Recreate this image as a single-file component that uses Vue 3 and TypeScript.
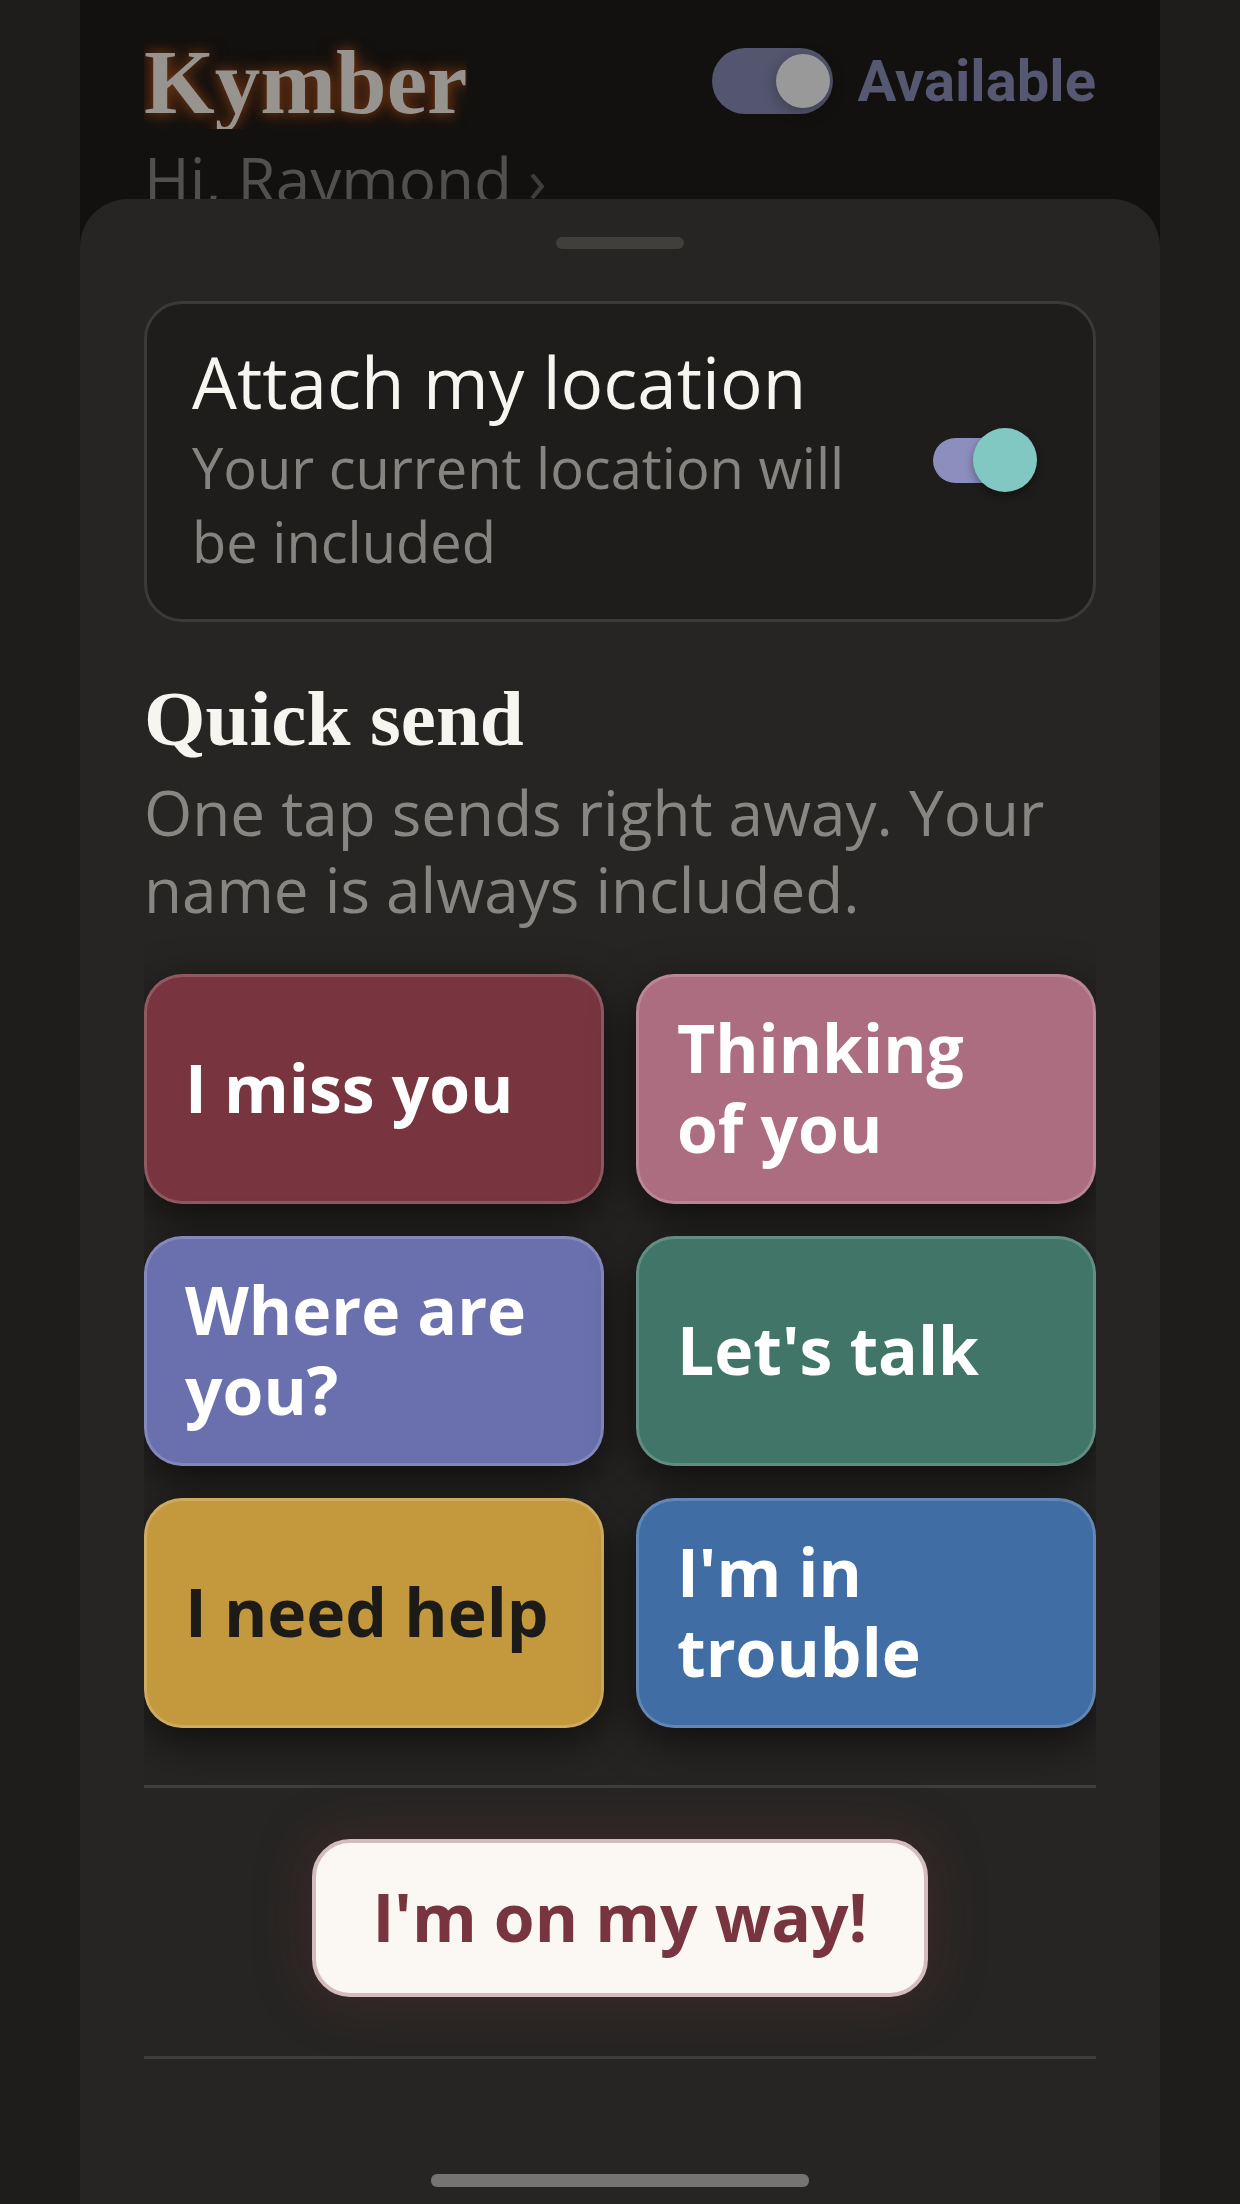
<script setup lang="ts">
import { ref } from 'vue'

interface QuickMessage {
  id: string
  text: string
}

const available = ref<boolean>(true)
const attachLocation = ref<boolean>(true)

const messages: QuickMessage[] = [
  { id: 'miss', text: 'I miss you' },
  { id: 'thinking', text: 'Thinking of you' },
  { id: 'where', text: 'Where are you?' },
  { id: 'talk', text: "Let's talk" },
  { id: 'help', text: 'I need help' },
  { id: 'trouble', text: "I'm in trouble" },
]
</script>

<template>
  <div class="phone">
    <header class="top">
      <div class="top-row">
        <h1 class="brand">Kymber</h1>
        <div class="status">
          <input id="available" v-model="available" class="switch switch-status" type="checkbox" role="switch" />
          <label class="status-label" for="available">Available</label>
        </div>
      </div>
      <a class="greeting" href="#profile">Hi, Raymond <span class="chevron">›</span></a>
    </header>

    <main class="sheet">
      <div class="handle"></div>

      <section class="location">
        <div class="location-text">
          <label class="location-title" for="attach-location">Attach my location</label>
          <p class="location-note">Your current location will be included</p>
        </div>
        <input id="attach-location" v-model="attachLocation" class="switch switch-location" type="checkbox" role="switch" />
      </section>

      <h2 class="heading">Quick send</h2>
      <p class="lead">One tap sends right away. Your name is always included.</p>

      <div class="messages">
        <button v-for="m in messages" :key="m.id" type="button" class="message" :class="m.id">{{ m.text }}</button>
      </div>

      <div class="arrival">
        <button type="button" class="on-my-way">I'm on my way!</button>
      </div>

      <div class="home-bar"></div>
    </main>
  </div>
</template>

<style>
body {
  margin: 0;
  background: #1e1d1b;
}
</style>

<style scoped>
.phone {
  box-sizing: border-box;
  display: flex;
  flex-direction: column;
  max-width: 1080px;
  min-height: 100vh;
  margin: 0 auto;
  background: #12110f;
  font-family: "Open Sans", "Noto Sans", sans-serif;
}

.top {
  padding: 37px 64px 0;
}

.top-row {
  display: flex;
  align-items: flex-start;
  justify-content: space-between;
}

.brand {
  margin: 0;
  overflow: hidden;
  font: 700 91px/92px "Liberation Serif", serif;
  color: #979490;
  text-shadow: 0 0 12px #6e3414, 0 2px 20px #5a2a10;
}

.status {
  display: flex;
  align-items: center;
  gap: 24px;
  margin-top: 11px;
}

.status-label {
  font: 700 58px/66px Roboto, sans-serif;
  color: #565872;
}

.greeting {
  display: block;
  margin-top: 10px;
  font-size: 62px;
  line-height: 80px;
  color: #50504e;
  text-decoration: none;
}

.chevron {
  color: #3e3d3b;
}

.switch {
  appearance: none;
  position: relative;
  flex: none;
  margin: 0;
}

.switch::before {
  content: "";
  position: absolute;
  border-radius: 50%;
}

.switch-status {
  width: 121px;
  height: 66px;
  border-radius: 33px;
  background: #54566f;
}

.switch-status::before {
  top: 6px;
  left: 6px;
  width: 54px;
  height: 54px;
  background: #999999;
  box-shadow: 0 4px 16px rgba(0, 0, 0, 0.3);
}

.switch-status:checked::before {
  left: 64px;
}

.switch-location {
  width: 96px;
  height: 45px;
  margin-right: 16px;
  border-radius: 23px;
  background: #8c8ebd;
}

.switch-location::before {
  top: -10px;
  left: -8px;
  width: 64px;
  height: 64px;
  background: #80c8c1;
  box-shadow: 0 4px 8px rgba(0, 0, 0, 0.35);
}

.switch-location:checked::before {
  left: 40px;
}

.sheet {
  position: relative;
  display: flex;
  flex: 1;
  flex-direction: column;
  margin-top: -20px;
  padding: 38px 64px 17px;
  border-radius: 48px 48px 0 0;
  background: #262523;
}

.handle {
  align-self: center;
  width: 128px;
  height: 12px;
  border-radius: 6px;
  background: #403f3b;
}

.location {
  display: flex;
  align-items: center;
  justify-content: space-between;
  gap: 32px;
  margin-top: 52px;
  padding: 38px 48px 41px 45px;
  border: 3px solid #3b3a38;
  border-radius: 38px;
  background: #1e1d1b;
}

.location-title {
  display: block;
  font-size: 71px;
  font-weight: 500;
  line-height: 80px;
  color: #f7f5f0;
}

.location-note {
  margin: 8px 0 0;
  font-size: 56px;
  line-height: 74px;
  color: #868480;
}

.heading {
  margin: 53px 0 0;
  font: 700 79px/88px "Liberation Serif", serif;
  color: #f7f5f0;
}

.lead {
  margin: 11px 0 0;
  font-size: 62px;
  line-height: 77px;
  color: #888682;
}

.messages {
  display: grid;
  grid-template-columns: 1fr 1fr;
  gap: 32px;
  margin: 0 -64px;
  padding: 46px 64px 57px;
  clip-path: inset(0 64px);
}

.message {
  position: relative;
  min-height: 230px;
  padding: 30px 50px 34px 38px;
  border: 3px solid rgba(255, 255, 255, 0.18);
  border-radius: 38px;
  box-shadow: 0 14px 44px rgba(0, 0, 0, 0.6);
  font: 700 66px/80px "Open Sans", "Noto Sans", sans-serif;
  text-align: left;
  color: #ffffff;
}

.miss {
  background-color: #78353f;
}

.thinking {
  background-color: #ad6d80;
}

.where {
  background-color: #6a70ad;
}

.talk {
  background-color: #407567;
}

.help {
  background-color: #c4993e;
  color: #1c1b18;
}

.trouble {
  background-color: #406da4;
}

.arrival {
  display: flex;
  justify-content: center;
  padding: 51px 0 59px;
  border-top: 3px solid #3f3e3b;
  border-bottom: 3px solid #3f3e3b;
}

.on-my-way {
  padding: 37px 56px 41px;
  border: 4px solid #d4bbbc;
  border-radius: 38px;
  background: #fbf8f3;
  box-shadow: 0 0 56px rgba(120, 52, 63, 0.35);
  font: 700 66px/72px "Open Sans", "Noto Sans", sans-serif;
  color: #78343f;
}

.home-bar {
  align-self: center;
  width: 378px;
  height: 13px;
  margin-top: auto;
  border-radius: 6px;
  background: #757472;
}
</style>
